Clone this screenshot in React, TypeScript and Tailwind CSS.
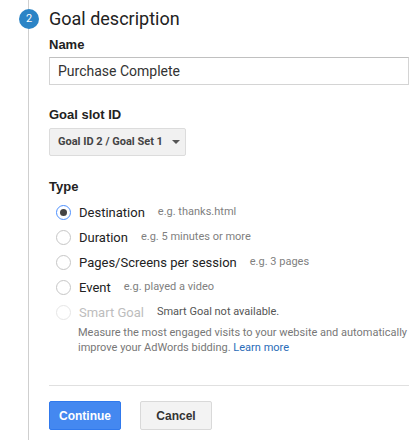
import React from 'react';

const hints: { label: string; hint: string; checked?: boolean }[] = [
  { label: 'Destination', hint: 'e.g. thanks.html', checked: true },
  { label: 'Duration', hint: 'e.g. 5 minutes or more' },
  { label: 'Pages/Screens per session', hint: 'e.g. 3 pages' },
  { label: 'Event', hint: 'e.g. played a video' },
];

const Radio: React.FC<{ checked?: boolean; disabled?: boolean }> = ({ checked, disabled }) => (
  <span
    className={
      checked
        ? 'flex h-[15px] w-[15px] shrink-0 items-center justify-center rounded-full border border-[#4d90fe] bg-white'
        : disabled
        ? 'flex h-[15px] w-[15px] shrink-0 rounded-full border border-[#e6e6e6] bg-white'
        : 'flex h-[15px] w-[15px] shrink-0 rounded-full border border-[#c6c6c6] bg-white'
    }
  >
    {checked && <span className="h-[7px] w-[7px] rounded-full bg-[#444]" />}
  </span>
);

const App: React.FC = () => {
  return (
    <div className="flex h-[440px] w-[410px] overflow-hidden bg-white font-['Roboto',sans-serif] text-[#333]">
      {/* Step rail */}
      <div className="relative w-[49px] shrink-0">
        <div className="ml-[28px] h-full border-l border-[#cfcfcf]" />
        <div className="absolute left-[19px] top-[9px] flex h-[20px] w-[20px] items-center justify-center rounded-full bg-[#2b84c6] text-[11px] text-white">
          2
        </div>
      </div>

      {/* Form */}
      <div className="flex w-[360px] flex-col">
        <h2 className="mt-[7px] text-[18px] leading-[24px] text-[#222]">Goal description</h2>

        <label className="mt-[6px] font-['Liberation_Sans',sans-serif] text-[13px] font-bold leading-[16px] text-[#222]">
          Name
        </label>
        <div className="mt-[4px] flex h-[28px] items-center border border-[#d4d4d4] border-t-[#c0c0c0] px-[8px] text-[14px] text-[#333]">
          Purchase Complete
        </div>

        <label className="mt-[22px] font-['Liberation_Sans',sans-serif] text-[13px] font-bold leading-[16px] text-[#222]">
          Goal slot ID
        </label>
        <div>
          <button className="mt-[5px] flex h-[28px] w-[137px] items-center gap-[9px] whitespace-nowrap rounded-[2px] border border-[#dcdcdc] bg-[#f1f1f1] pl-[8px] font-['Roboto',sans-serif] text-[11px] font-bold text-[#444]">
            Goal ID 2 / Goal Set 1
            <span className="h-0 w-0 border-x-[4px] border-t-[4px] border-x-transparent border-t-[#555]" />
          </button>
        </div>

        <label className="mt-[23px] font-['Liberation_Sans',sans-serif] text-[13px] font-bold leading-[16px] text-[#222]">
          Type
        </label>

        <div className="mt-[5px] flex flex-col pl-[7px]">
          {hints.map((h) => (
            <div key={h.label} className="flex h-[25px] items-center">
              <Radio checked={h.checked} />
              <span className="ml-[8px] text-[13px] text-[#222]">{h.label}</span>
              <span className="ml-[13px] text-[11px] text-[#808080]">{h.hint}</span>
            </div>
          ))}
          <div className="flex h-[25px] items-center">
            <Radio disabled />
            <span className="ml-[8px] text-[13px] text-[#bdbdbd]">Smart Goal</span>
            <span className="ml-[13px] text-[11px] text-[#555]">Smart Goal not available.</span>
          </div>
          <p className="ml-[22px] text-[11px] leading-[15px] text-[#777]">
            Measure the most engaged visits to your website and automatically improve your AdWords bidding.{' '}
            <a className="text-[#2a6cb8]">Learn more</a>
          </p>
        </div>

        <div className="mt-[30px] border-t border-[#e0e0e0]" />

        <div className="mt-[15px] flex gap-[19px]">
          <button className="flex h-[29px] w-[72px] items-center justify-center rounded-[2px] border border-[#3079ed] bg-[#4488f0] font-['Liberation_Sans',sans-serif] text-[12px] font-bold text-white">
            Continue
          </button>
          <button className="flex h-[29px] w-[72px] items-center justify-center rounded-[2px] border border-[#d9d9d9] bg-[#f3f3f3] font-['Liberation_Sans',sans-serif] text-[12px] font-bold text-[#333]">
            Cancel
          </button>
        </div>
      </div>
    </div>
  );
};

export default App;
